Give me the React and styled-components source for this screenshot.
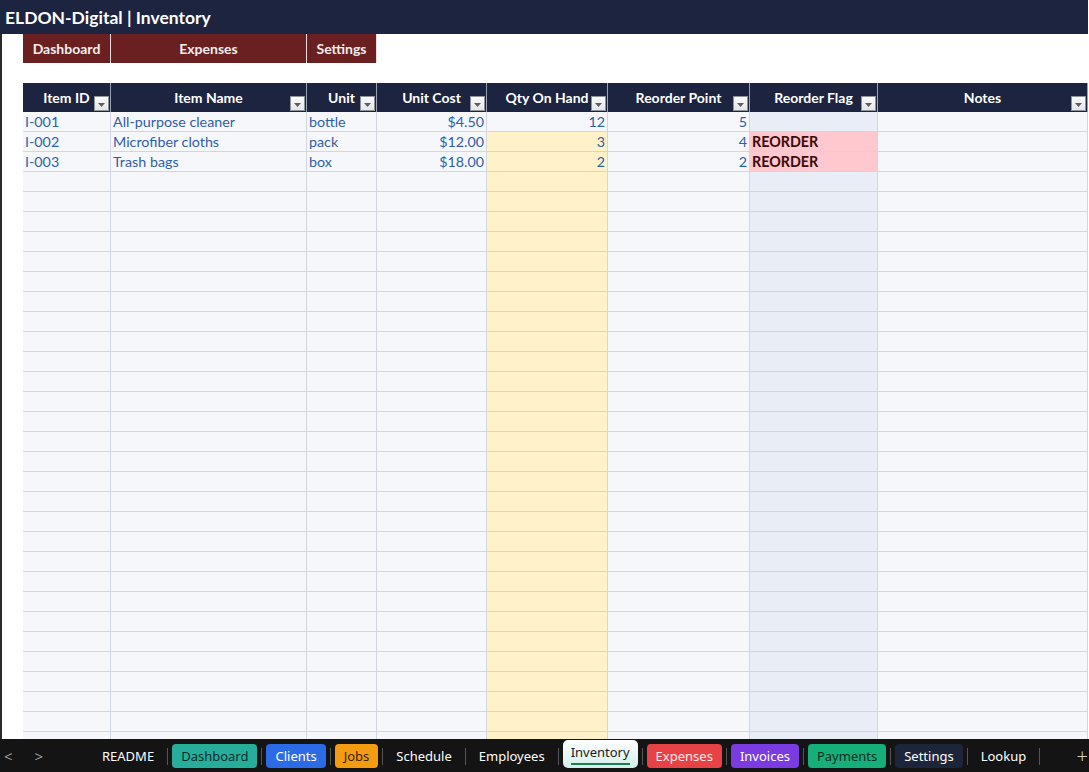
import React from 'react';
import styled, { createGlobalStyle } from 'styled-components';

const GlobalStyle = createGlobalStyle`
    html, body {
        margin: 0;
        padding: 0;
        background: #ffffff;
        overflow: hidden;
    }
    #root {
        height: 100vh;
    }
`;

const columns = [
    { key: 'id', label: 'Item ID', align: 'left' },
    { key: 'name', label: 'Item Name', align: 'left' },
    { key: 'unit', label: 'Unit', align: 'left' },
    { key: 'cost', label: 'Unit Cost', align: 'right' },
    { key: 'qty', label: 'Qty On Hand', align: 'right' },
    { key: 'point', label: 'Reorder Point', align: 'right' },
    { key: 'flag', label: 'Reorder Flag', align: 'left' },
    { key: 'notes', label: 'Notes', align: 'left' },
];

const items = [
    { id: 'I-001', name: 'All-purpose cleaner', unit: 'bottle', cost: '$4.50', qty: 12, point: 5, flag: '' },
    { id: 'I-002', name: 'Microfiber cloths', unit: 'pack', cost: '$12.00', qty: 3, point: 4, flag: 'REORDER' },
    { id: 'I-003', name: 'Trash bags', unit: 'box', cost: '$18.00', qty: 2, point: 2, flag: 'REORDER' },
];

const rows = [...items];
while (rows.length < 32) rows.push({});

const navLinks = ['Dashboard', 'Expenses', 'Settings'];

const tabs = [
    { name: 'README' },
    { name: 'Dashboard', bg: '#27ad9c', color: '#0d2f2b' },
    { name: 'Clients', bg: '#2c6be6', color: '#ffffff' },
    { name: 'Jobs', bg: '#f39c12', color: '#3a2200' },
    { name: 'Schedule' },
    { name: 'Employees' },
    { name: 'Inventory', active: true },
    { name: 'Expenses', bg: '#e74346', color: '#ffe9e9' },
    { name: 'Invoices', bg: '#7a3be0', color: '#ffffff' },
    { name: 'Payments', bg: '#16ae79', color: '#06301f' },
    { name: 'Settings', bg: '#1d253a', color: '#ffffff' },
    { name: 'Lookup' },
];

const cellBg = (col, row) => {
    if (col.key === 'qty') {
        if (row.qty === undefined || row.qty <= row.point) return '#fff2c9';
    }
    if (col.key === 'flag') {
        return row.flag ? '#ffc7ce' : '#e9edf6';
    }
    return '#f5f7fb';
};

export default function App() {
    return (
        <Page>
            <GlobalStyle />
            <TitleBar>ELDON-Digital | Inventory</TitleBar>
            <SheetArea>
                <LeftStrip />
                <Sheet>
                    <Blank />
                    {navLinks.map((link) => (
                        <NavButton key={link}>{link}</NavButton>
                    ))}
                    <Blank $span={6} />

                    <Blank $span={10} />

                    <Blank />
                    {columns.map((col) => (
                        <HeaderCell key={col.key}>
                            {col.label}
                            <FilterButton>
                                <svg width="7" height="4" viewBox="0 0 7 4">
                                    <path d="M0 0 H7 L3.5 4 Z" fill="#5a5f66" />
                                </svg>
                            </FilterButton>
                        </HeaderCell>
                    ))}
                    <Blank />

                    {rows.map((row, r) => (
                        <React.Fragment key={r}>
                            <Blank />
                            {columns.map((col) => (
                                <DataCell
                                    key={col.key}
                                    $align={col.align}
                                    $bg={cellBg(col, row)}
                                    $flag={col.key === 'flag'}
                                >
                                    {row[col.key]}
                                </DataCell>
                            ))}
                            <Blank />
                        </React.Fragment>
                    ))}
                </Sheet>
            </SheetArea>
            <TabBar>
                <Arrows>
                    <Arrow>&lt;</Arrow>
                    <Arrow>&gt;</Arrow>
                </Arrows>
                {tabs.map((tab, i) => (
                    <React.Fragment key={tab.name}>
                        {i > 0 && <Separator />}
                        {tab.active ? (
                            <ActiveTab>
                                <ActiveLabel>{tab.name}</ActiveLabel>
                            </ActiveTab>
                        ) : (
                            <Tab $bg={tab.bg} $color={tab.color}>
                                {tab.name}
                            </Tab>
                        )}
                    </React.Fragment>
                ))}
                <Separator />
                <AddTab>+</AddTab>
            </TabBar>
        </Page>
    );
}

const Page = styled.div`
    display: flex;
    flex-direction: column;
    height: 100vh;
    font-family: 'Lato', 'Liberation Sans', sans-serif;
`;

const TitleBar = styled.div`
    flex: 0 0 34px;
    display: flex;
    align-items: center;
    padding-left: 5px;
    margin-right: 1px;
    background: #1c2440;
    color: #ffffff;
    font-size: 17.5px;
    font-weight: 700;
`;

const SheetArea = styled.div`
    flex: 1;
    display: flex;
    overflow: hidden;
    min-height: 0;
`;

const LeftStrip = styled.div`
    flex: 0 0 2px;
    background: #2a2a2a;
`;

const Sheet = styled.div`
    flex: 1;
    display: grid;
    grid-template-columns: 21px 88px 196px 70px 110px 121px 142px 128px 210px 1fr;
    grid-template-rows: 29px 20px 29px;
    grid-auto-rows: 20px;
    align-content: start;
    overflow: hidden;
`;

const Blank = styled.div`
    grid-column: span ${(p) => p.$span || 1};
    background: #ffffff;
`;

const NavButton = styled.div`
    display: flex;
    align-items: center;
    justify-content: center;
    background: #6a2020;
    border-right: 1px solid #e9dcdc;
    color: #f6eded;
    font-size: 14px;
    font-weight: 700;
`;

const HeaderCell = styled.div`
    position: relative;
    display: flex;
    align-items: center;
    justify-content: center;
    background: #1c2440;
    border-right: 1px solid #9aa1b3;
    color: #ffffff;
    font-size: 14px;
    font-weight: 700;
    white-space: nowrap;
`;

const FilterButton = styled.span`
    position: absolute;
    right: 1px;
    bottom: 1px;
    width: 15px;
    height: 15px;
    box-sizing: border-box;
    display: flex;
    align-items: center;
    justify-content: center;
    padding-top: 2px;
    background: linear-gradient(#fbfbfb, #e4e5e8);
    border: 1px solid #8e949c;
`;

const DataCell = styled.div`
    display: flex;
    align-items: center;
    justify-content: ${(p) => (p.$align === 'right' ? 'flex-end' : 'flex-start')};
    padding: 0 2px;
    background: ${(p) => p.$bg};
    border-right: 1px solid #d2d6de;
    border-bottom: 1px solid #d2d6de;
    color: ${(p) => (p.$flag ? '#3a0b0b' : '#2f5ea8')};
    font-size: 14.3px;
    font-weight: ${(p) => (p.$flag ? 700 : 400)};
    white-space: nowrap;
    overflow: hidden;
`;

const TabBar = styled.div`
    flex: 0 0 33px;
    display: flex;
    align-items: center;
    background: #141414;
    font-family: 'Noto Sans', 'Open Sans', sans-serif;
    font-size: 13px;
    color: #ffffff;
    overflow: hidden;
    white-space: nowrap;
`;

const Arrows = styled.div`
    flex: 0 0 93px;
    display: flex;
    gap: 22px;
    padding-left: 4px;
    box-sizing: border-box;
`;

const Arrow = styled.span`
    color: #9b9b9b;
    font-size: 15px;
`;

const Separator = styled.span`
    flex: 0 0 1px;
    height: 17px;
    margin: 1px 4px 0;
    background: #555555;
`;

const Tab = styled.span`
    display: flex;
    align-items: center;
    height: 24px;
    margin-top: 1px;
    padding: 0 9px;
    border-radius: 4px;
    background: ${(p) => p.$bg || 'transparent'};
    color: ${(p) => p.$color || '#ffffff'};
`;

const ActiveTab = styled.span`
    display: flex;
    align-items: flex-start;
    height: 28px;
    margin-bottom: 4px;
    margin-top: 1px;
    padding: 0 8px;
    border-radius: 5px;
    background: linear-gradient(#ffffff, #d3efea);
    color: #1b1b1b;
`;

const ActiveLabel = styled.span`
    margin-top: 3px;
    padding-bottom: 1px;
    line-height: 19px;
    border-bottom: 2px solid #1c7d58;
`;

const AddTab = styled.span`
    margin-left: auto;
    margin-right: 1px;
    color: #cfcfcf;
    font-size: 20px;
    font-weight: 300;
`;
